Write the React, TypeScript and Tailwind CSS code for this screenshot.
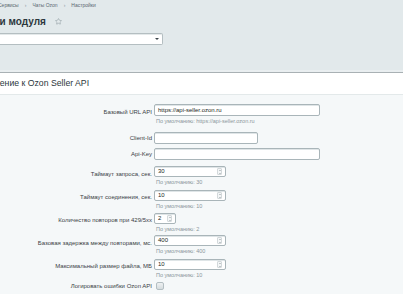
import { Star } from 'lucide-react';

type Field = {
  label: string;
  pad: string;
  h: string;
  kind: 'text' | 'number' | 'check';
  value?: string;
  width?: string;
  hint?: string;
};

// Поля вкладки «Подключение к Ozon Seller API»
const fields: Field[] = [
  { label: 'Базовый URL API', pad: 'pt-[4px]', h: 'h-[28px]', kind: 'text', value: 'https://api-seller.ozon.ru', width: 'w-[166px]', hint: 'По умолчанию: https://api-seller.ozon.ru' },
  { label: 'Client-Id', pad: 'pt-[2px]', h: 'h-[16px]', kind: 'text', value: '', width: 'w-[104px]' },
  { label: 'Api-Key', pad: 'pt-[2px]', h: 'h-[18px]', kind: 'text', value: '', width: 'w-[166px]' },
  { label: 'Таймаут запроса, сек.', pad: 'pt-[4px]', h: 'h-[24px]', kind: 'number', value: '30', width: 'w-[72px]', hint: 'По умолчанию: 30' },
  { label: 'Таймаут соединения, сек.', pad: 'pt-[3px]', h: 'h-[23px]', kind: 'number', value: '10', width: 'w-[72px]', hint: 'По умолчанию: 10' },
  { label: 'Количество повторов при 429/5xx', pad: 'pt-[3px]', h: 'h-[22px]', kind: 'number', value: '2', width: 'w-[22px]', hint: 'По умолчанию: 2' },
  { label: 'Базовая задержка между повторами, мс.', pad: 'pt-[4px]', h: 'h-[24px]', kind: 'number', value: '400', width: 'w-[72px]', hint: 'По умолчанию: 400' },
  { label: 'Максимальный размер файла, МБ', pad: 'pt-[3px]', h: 'h-[23px]', kind: 'number', value: '10', width: 'w-[72px]', hint: 'По умолчанию: 10' },
  { label: 'Логировать ошибки Ozon API', pad: 'pt-[0px]', h: 'h-[12px]', kind: 'check' },
];

function Spinner() {
  return (
    <div className="flex h-[7px] w-[5px] flex-col items-center justify-between rounded-[1px] border border-[#d3d9db] bg-[#f4f6f7] py-[0.5px]">
      <div className="h-0 w-0 border-x-[1.5px] border-b-[1.5px] border-x-transparent border-b-[#8a969b]" />
      <div className="h-0 w-0 border-x-[1.5px] border-t-[1.5px] border-x-transparent border-t-[#8a969b]" />
    </div>
  );
}

function Control({ f }: { f: Field }) {
  if (f.kind === 'check') {
    return <div className="ml-[2px] h-[8px] w-[8px] rounded-[2px] border border-[#b3bec2] bg-gradient-to-b from-[#eef1f2] to-[#d5dcde]" />;
  }
  const h = f.kind === 'text' ? 'h-[12px]' : 'h-[11px]';
  return (
    <div>
      <div
        className={`flex ${h} ${f.width} items-center justify-between rounded-[2px] border border-[#a9b5b9] bg-white pl-[3px] pr-[3px] text-[6px] text-[#1a1f22] shadow-[inset_0_1px_0_#dfe5e7]`}
      >
        <span>{f.value}</span>
        {f.kind === 'number' && <Spinner />}
      </div>
      {f.hint && <div className="mt-[2px] pl-[2px] text-[5.5px] leading-[7px] text-[#8b969b]">{f.hint}</div>}
    </div>
  );
}

export default function App() {
  return (
    <div className="h-[294px] w-[403px] overflow-hidden bg-[#e2e9eb] font-['Liberation_Sans',Arial,sans-serif]">
      <div className="flex h-[11px] items-center gap-[6px] text-[5px] text-[#5b6870]">
        <span className="-ml-[2px]">Сервисы</span>
        <span className="text-[#8a969b]">›</span>
        <span>Чаты Ozon</span>
        <span className="text-[#8a969b]">›</span>
        <span>Настройки</span>
      </div>

      <div className="flex h-[21px] items-center gap-[9px]">
        <h1 className="-ml-[47px] text-[10px] font-bold text-[#2c373d]">Настройки модуля</h1>
        <Star size={7} strokeWidth={1.6} className="text-[#7f8c92]" />
      </div>

      <div className="mt-[1px] flex h-[12px] w-[163px] items-center justify-end rounded-r-[2px] border border-l-0 border-[#b4bec1] bg-white pr-[3px] shadow-[inset_0_1px_0_#e4e9ea]">
        <div className="h-0 w-0 border-x-[2px] border-t-[2px] border-x-transparent border-t-[#3a4348]" />
      </div>

      <div className="h-[25px]" />
      <div className="h-[2px] bg-[#e9eef0]" />
      <div className="h-[1px] bg-[#a9b1b4]" />

      <div className="flex h-[22px] items-center border-b border-[#e3e9ea] bg-white">
        <h2 className="-ml-[36px] text-[8.7px] text-[#2c373d]">Подключение к Ozon Seller API</h2>
      </div>

      <div className="h-full bg-[#f5f8f9] pt-[9px] text-[6px] text-[#3a4145]">
        {fields.map((f) => (
          <div key={f.label} className={`flex ${f.h}`}>
            <div className={`w-[154px] shrink-0 pr-[2px] text-right leading-[8px] ${f.pad}`}>{f.label}</div>
            <Control f={f} />
          </div>
        ))}
      </div>
    </div>
  );
}
